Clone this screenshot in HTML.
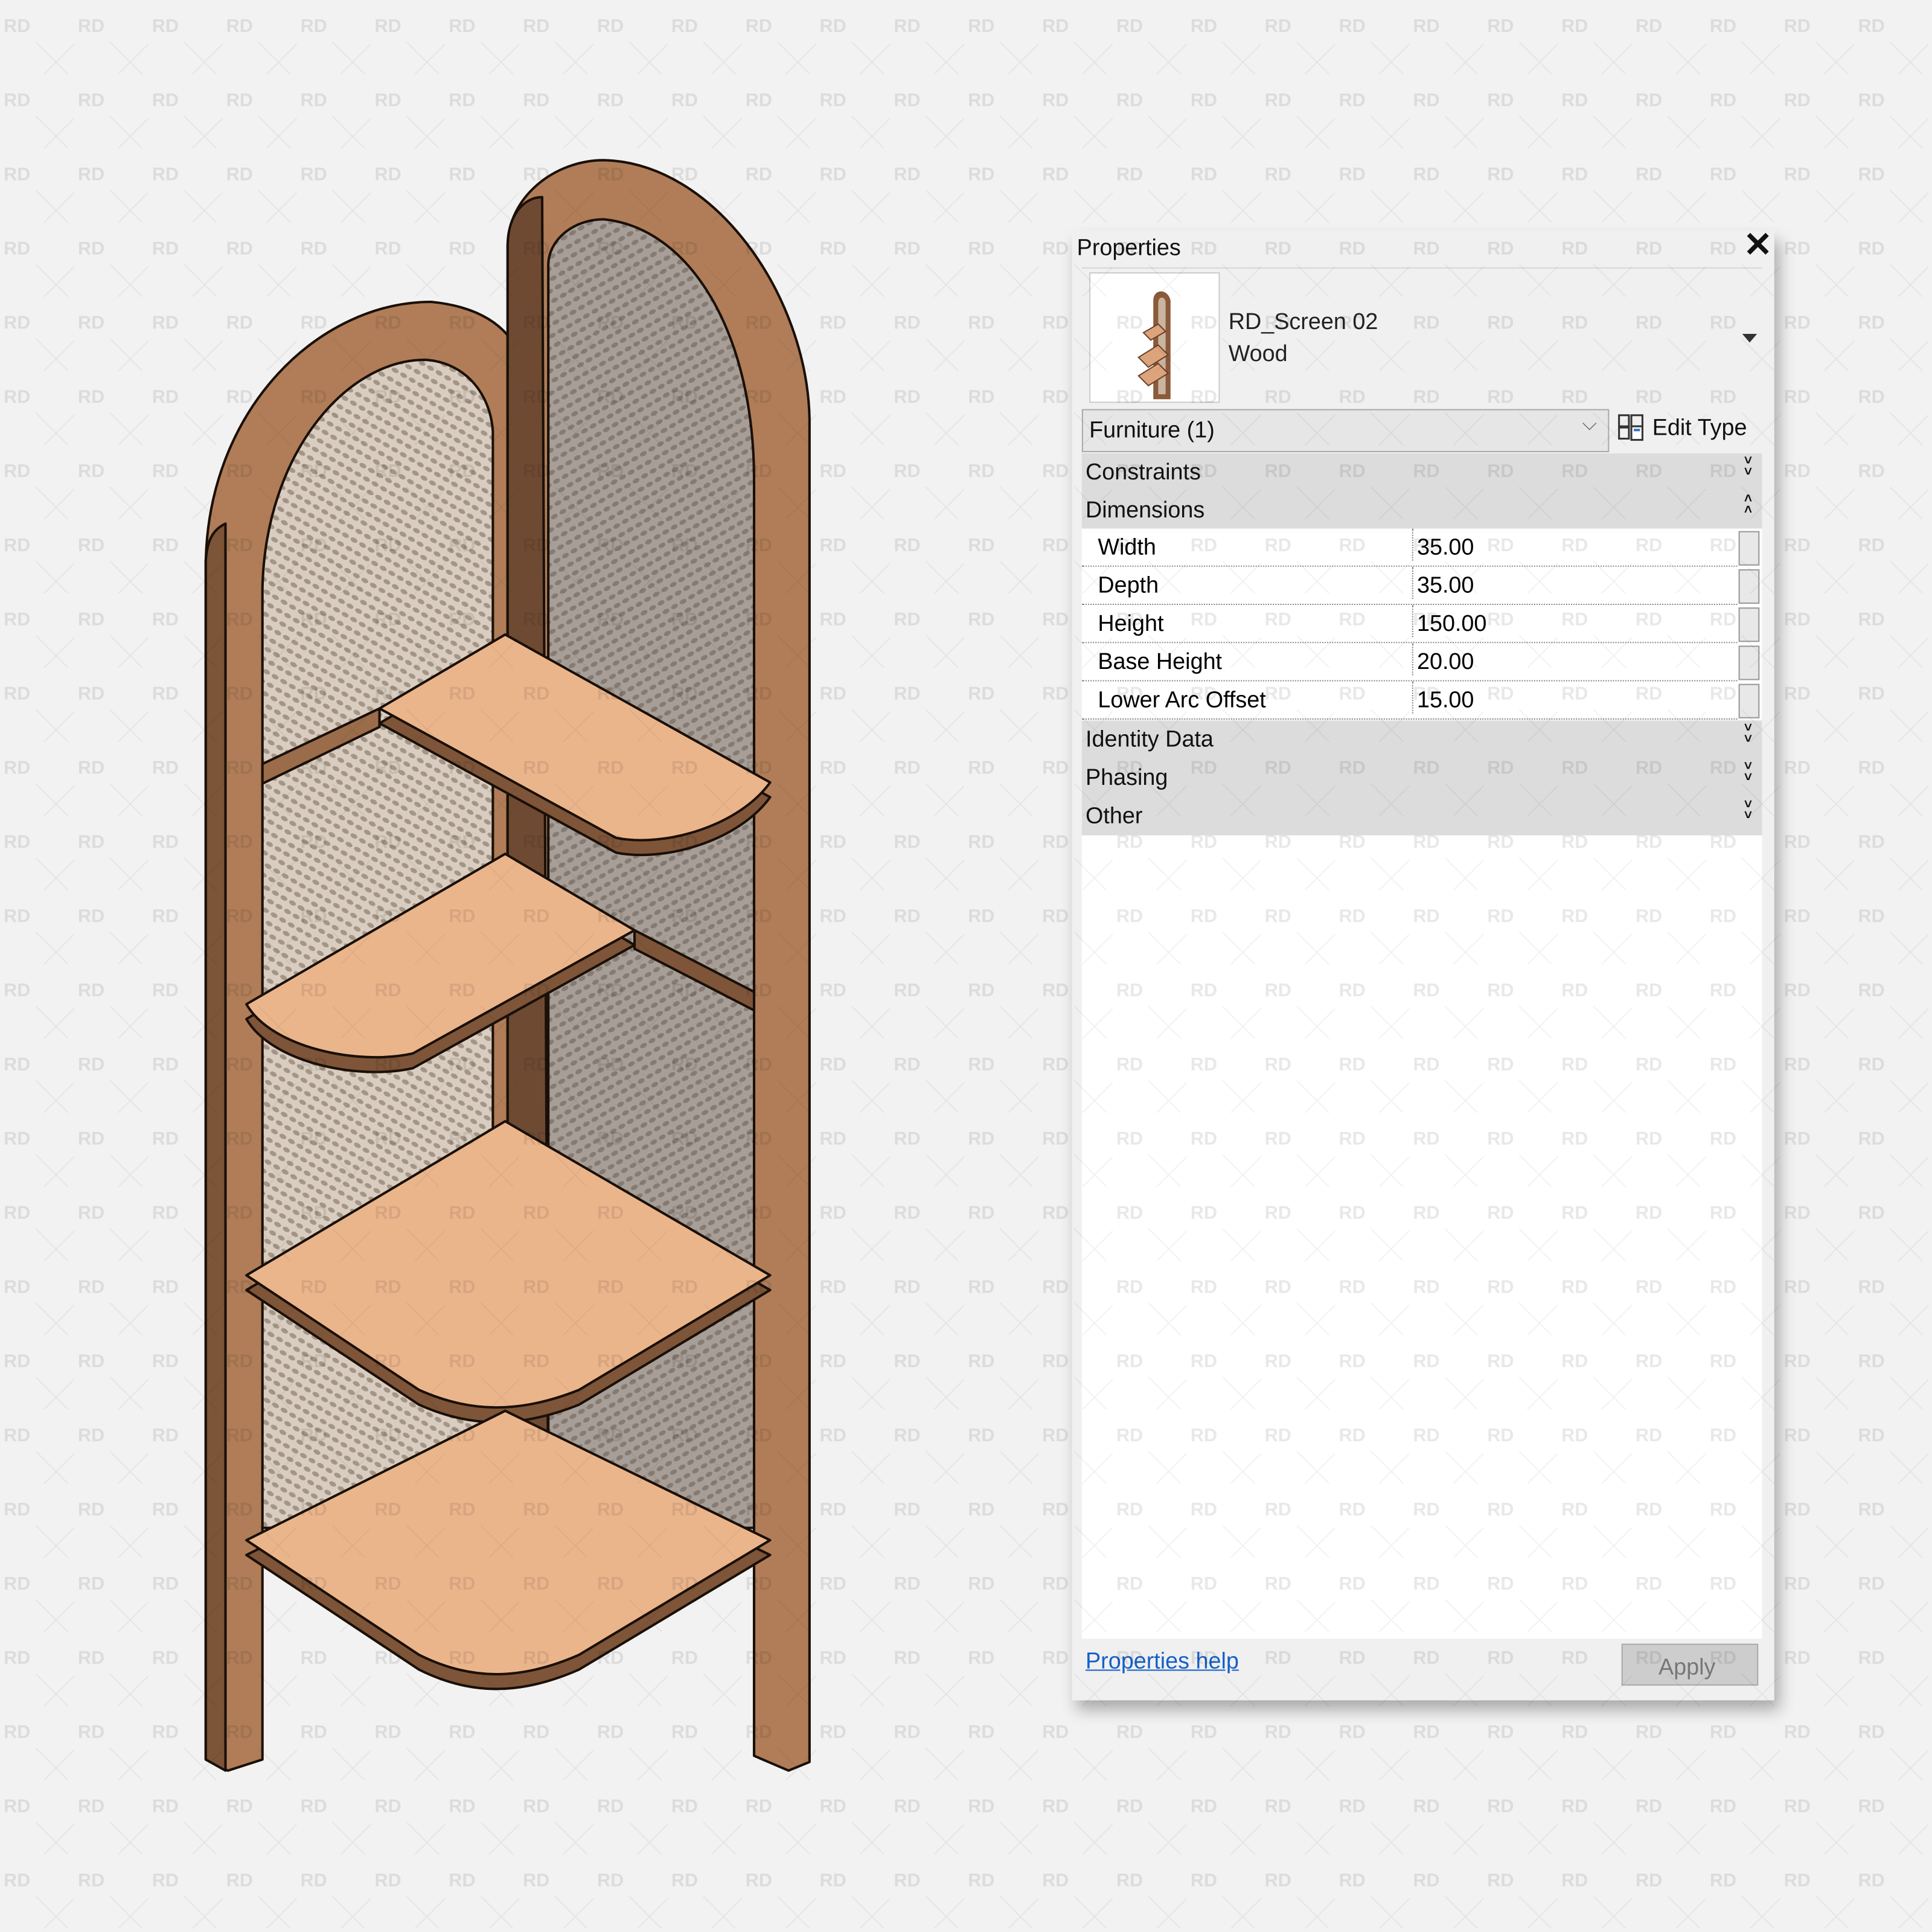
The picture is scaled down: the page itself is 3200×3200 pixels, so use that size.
<!DOCTYPE html>
<html><head><meta charset="utf-8"><style>
html,body{margin:0;padding:0;}
body{width:3200px;height:3200px;overflow:hidden;background:#f2f2f2;position:relative;font-family:"Liberation Sans",sans-serif;}
#s{position:absolute;left:0;top:0;width:1568px;height:1568px;transform:scale(2.04082);transform-origin:0 0;}
.a{position:absolute;}
.t{position:absolute;font-size:18.5px;color:#111;white-space:nowrap;}
.cat{position:absolute;left:878px;width:552px;height:31px;background:#dcdcdc;}
.cat span{position:absolute;left:3px;top:4px;font-size:18.5px;color:#111;}
.cat b{position:absolute;right:8px;top:2px;font-size:11px;line-height:9px;font-weight:bold;color:#111;}
.row{position:absolute;left:878px;width:532px;height:30px;background:#fff;border-bottom:1px dotted #888;}
.row span{position:absolute;left:13px;top:4px;font-size:18.5px;}
.row i{position:absolute;left:268px;top:4px;font-style:normal;font-size:18.5px;border-left:1px dotted #888;padding-left:3px;height:26px;top:0;line-height:30px;}
.sb{position:absolute;left:1411px;width:15px;height:26px;background:#e8e8e8;border:1px solid #999;}
</style></head><body>
<div id="s">
<svg class="a" style="left:0;top:0" width="1568" height="1568" viewBox="0 0 1568 1568">
<defs>
<pattern id="ml" width="8" height="8" patternUnits="userSpaceOnUse" patternTransform="rotate(30)">
<rect width="8" height="8" fill="#d8cdc0"/><ellipse cx="4" cy="4" rx="3" ry="1.8" fill="#a49585"/></pattern>
<pattern id="md" width="8" height="8" patternUnits="userSpaceOnUse" patternTransform="rotate(-30)">
<rect width="8" height="8" fill="#a69e97"/><ellipse cx="4" cy="4" rx="3" ry="1.8" fill="#857b73"/></pattern>
</defs>
<g stroke="#1a1008" stroke-width="2" stroke-linejoin="round">
<path d="M167,1428 L167,455 C170,330 260,245 350,245 C380,248 400,258 412,272 L412,1240 L213,1240 L213,1428 L185,1437 Z" fill="#b07d58"/>
<path d="M167,1428 L167,455 C168,440 172,430 183,425 L183,1437 Z" fill="#7c5438"/>
<path d="M213,1240 L213,478 C215,370 280,292 345,292 C378,294 398,320 400,350 L400,1240 Z" fill="url(#ml)"/>
<path d="M412,1240 L412,200 C412,160 450,130 490,130 C580,132 655,240 657,340 L657,1430 L640,1437 L612,1425 L612,1240 Z" fill="#b07d58"/>
<path d="M412,1240 L412,200 C412,175 425,160 440,160 L445,1240 Z" fill="#6f4a33"/>
<path d="M445,1240 L445,215 C445,195 465,178 490,178 C560,185 612,270 612,390 L612,1240 Z" fill="url(#md)"/>
<path d="M213,620 L308,575 L308,590 L213,636 Z" fill="#9a6c4a"/>
<path d="M515,755 L612,805 L612,820 L515,770 Z" fill="#7e5539"/>
<g fill="#7e5539">
<path d="M308,587 L410,527 L625,647 C600,682 540,700 500,692 L308,587 Z"/>
<path d="M200,827 L410,705 L515,767 L335,867 C290,877 220,862 200,827 Z"/>
<path d="M200,1047 L410,922 L625,1047 L470,1140 C420,1160 380,1158 340,1140 Z"/>
<path d="M200,1262 L410,1157 L625,1262 L470,1355 C420,1377 380,1375 340,1355 Z"/>
</g>
<g fill="#ebb58c">
<path d="M308,575 L410,515 L625,635 C600,670 540,688 500,680 L308,575 Z"/>
<path d="M200,815 L410,693 L515,755 L335,855 C290,865 220,850 200,815 Z"/>
<path d="M200,1035 L410,910 L625,1035 L470,1128 C420,1148 380,1146 340,1128 Z"/>
<path d="M200,1250 L410,1145 L625,1250 L470,1343 C420,1365 380,1363 340,1343 Z"/>
</g>
</g>
</svg>

<div class="a" style="left:870px;top:187px;width:570px;height:1193px;background:#f0f0f0;box-shadow:4px 8px 12px rgba(0,0,0,0.3);"></div>
<div class="t" style="left:874px;top:190px;">Properties</div>
<div class="t" style="left:1415px;top:182px;font-size:28px;font-weight:bold;">✕</div>
<div class="a" style="left:878px;top:217px;width:552px;height:1px;background:#d8d8d8;"></div>
<div class="a" style="left:884px;top:221px;width:104px;height:104px;background:#fff;border:1px solid #ccc;"></div>
<svg class="a" style="left:918px;top:230px" width="40" height="96" viewBox="0 0 40 96">
<path d="M18,94 L18,14 C18,4 30,4 32,14 L32,94 Z" fill="#8a5a3a"/>
<path d="M22,90 L22,16 C22,10 28,10 28,16 L28,90 Z" fill="#c9b4a0"/>
<path d="M6,60 L22,50 L30,58 L14,68 Z M6,75 L22,65 L30,73 L14,83 Z M10,40 L22,33 L28,39 L16,46 Z" fill="#dca47c" stroke="#6a4028" stroke-width="1"/>
</svg>
<div class="t" style="left:997px;top:250px;color:#222;">RD_Screen 02</div>
<div class="t" style="left:997px;top:276px;color:#222;">Wood</div>
<div class="a" style="left:1414px;top:271px;width:0;height:0;border-left:6px solid transparent;border-right:6px solid transparent;border-top:7px solid #333;"></div>
<div class="a" style="left:878px;top:332px;width:426px;height:33px;background:#e6e6e6;border:1px solid #aaa;"></div>
<div class="t" style="left:884px;top:338px;">Furniture (1)</div>
<div class="t" style="left:1284px;top:336px;color:#666;font-size:16px;">⌵</div>
<svg class="a" style="left:1313px;top:336px" width="22" height="22" viewBox="0 0 22 22" fill="none" stroke="#333" stroke-width="1.5"><rect x="1" y="1" width="8" height="9"/><rect x="1" y="11" width="8" height="9"/><rect x="11" y="1" width="9" height="9"/><rect x="11" y="10" width="9" height="11" fill="#fff"/><rect x="13" y="12" width="5" height="2" fill="#3a6fc0" stroke="none"/></svg>
<div class="t" style="left:1341px;top:336px;">Edit Type</div>

<div class="cat" style="top:368px;"><span>Constraints</span><b>˅<br>˅</b></div>
<div class="cat" style="top:399px;"><span>Dimensions</span><b>˄<br>˄</b></div>
<div class="row" style="top:429px;"><span>Width</span><i>35.00</i></div>
<div class="row" style="top:460px;"><span>Depth</span><i>35.00</i></div>
<div class="row" style="top:491px;"><span>Height</span><i>150.00</i></div>
<div class="row" style="top:522px;"><span>Base Height</span><i>20.00</i></div>
<div class="row" style="top:553px;"><span>Lower Arc Offset</span><i>15.00</i></div>
<div class="a" style="left:1410px;top:429px;width:20px;height:155px;background:#fff;"></div>
<div class="sb" style="top:431px;"></div><div class="sb" style="top:462px;"></div><div class="sb" style="top:493px;"></div><div class="sb" style="top:524px;"></div><div class="sb" style="top:555px;"></div>
<div class="cat" style="top:585px;"><span>Identity Data</span><b>˅<br>˅</b></div>
<div class="cat" style="top:616px;"><span>Phasing</span><b>˅<br>˅</b></div>
<div class="cat" style="top:647px;"><span>Other</span><b>˅<br>˅</b></div>
<div class="a" style="left:878px;top:678px;width:552px;height:652px;background:#fff;"></div>
<div class="t" style="left:881px;top:1337px;color:#1560c8;text-decoration:underline;">Properties help</div>
<div class="a" style="left:1316px;top:1334px;width:109px;height:32px;background:#cdcdcd;border:1px solid #aaa;"></div>
<div class="t" style="left:1346px;top:1342px;color:#777;">Apply</div>

<svg class="a" style="left:0;top:0" width="1568" height="1568" viewBox="0 0 1568 1568">
<defs><pattern id="wm" x="0" y="0" width="60.2" height="60.2" patternUnits="userSpaceOnUse">
<text x="3" y="26" font-family="Liberation Sans" font-weight="bold" font-size="15" fill="rgba(0,0,0,0.09)">RD</text>
<path d="M29,34 L62,67 M62,34 L29,67" stroke="rgba(0,0,0,0.06)" stroke-width="0.8"/>
</pattern></defs>
<rect width="1568" height="1568" fill="url(#wm)"/>
</svg>
</div>
</body></html>
